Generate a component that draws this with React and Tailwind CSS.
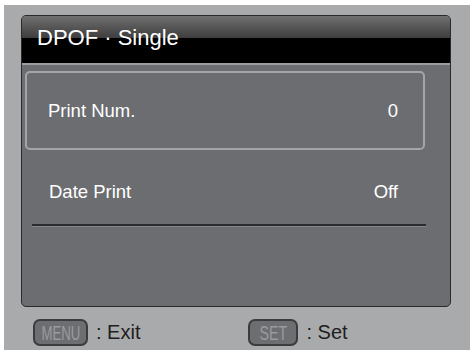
import React from 'react';

const font = { fontFamily: '"Liberation Sans", Arial, sans-serif' };

function KeyCap({ label, width, scale }) {
    return (
        <div className={`flex h-[27px] items-center justify-center rounded-[7px] border-2 border-[#3b3c3e] bg-[#6d6e71] ${width}`}>
            <span className={`inline-block text-[21px] leading-none text-[#9a9b9e] ${scale}`}>{label}</span>
        </div>
    );
}

export default function App() {
    return (
        <div className="h-[354px] w-[473px] bg-white pl-[4px] pt-[5px]" style={font}>
            <div className="flex h-[345px] w-[466px] flex-col bg-[#a9aaac] pl-[17px] pt-[10px]">
                <div className="flex h-[292px] w-[430px] flex-col overflow-hidden rounded-[5px] border border-[#2a2a2c] bg-[#6c6d71]">
                    <div className="h-[22px] bg-gradient-to-b from-[#707070] to-[#3e3e3e]" />
                    <div className="flex h-[25px] items-start bg-black pl-[15px]">
                        <span className="-mt-[11px] text-[22px] leading-none text-white">DPOF · Single</span>
                    </div>
                    <div className="h-[2px] bg-[#9c9da0]" />
                    <div className="flex w-[403px] flex-col pl-[3px] pt-[6px]">
                        <div className="flex h-[79px] items-center justify-between rounded-[5px] border-2 border-[#a4a5a8] pl-[21px] pr-[25px]">
                            <span className="text-[18.5px] text-white">Print Num.</span>
                            <span className="text-[18.5px] text-white">0</span>
                        </div>
                        <div className="flex h-[74px] items-center justify-between pl-[24px] pr-[27px] pt-[10px]">
                            <span className="text-[18.5px] text-white">Date Print</span>
                            <span className="text-[18.5px] text-white">Off</span>
                        </div>
                        <div className="ml-[7px] h-[2px] w-[394px] bg-[#2b2c2e] shadow-[0_1px_0_#85868a]" />
                    </div>
                </div>
                <div className="mt-[10px] flex items-center">
                    <div className="ml-[12px]">
                        <KeyCap label="MENU" width="w-[55px]" scale="scale-x-[0.63]" />
                    </div>
                    <span className="ml-[8px] text-[20px] text-[#1e1e1e]">: Exit</span>
                    <div className="ml-[108px]">
                        <KeyCap label="SET" width="w-[50px]" scale="scale-x-[0.68]" />
                    </div>
                    <span className="ml-[8px] text-[20px] text-[#1e1e1e]">: Set</span>
                </div>
            </div>
        </div>
    );
}
